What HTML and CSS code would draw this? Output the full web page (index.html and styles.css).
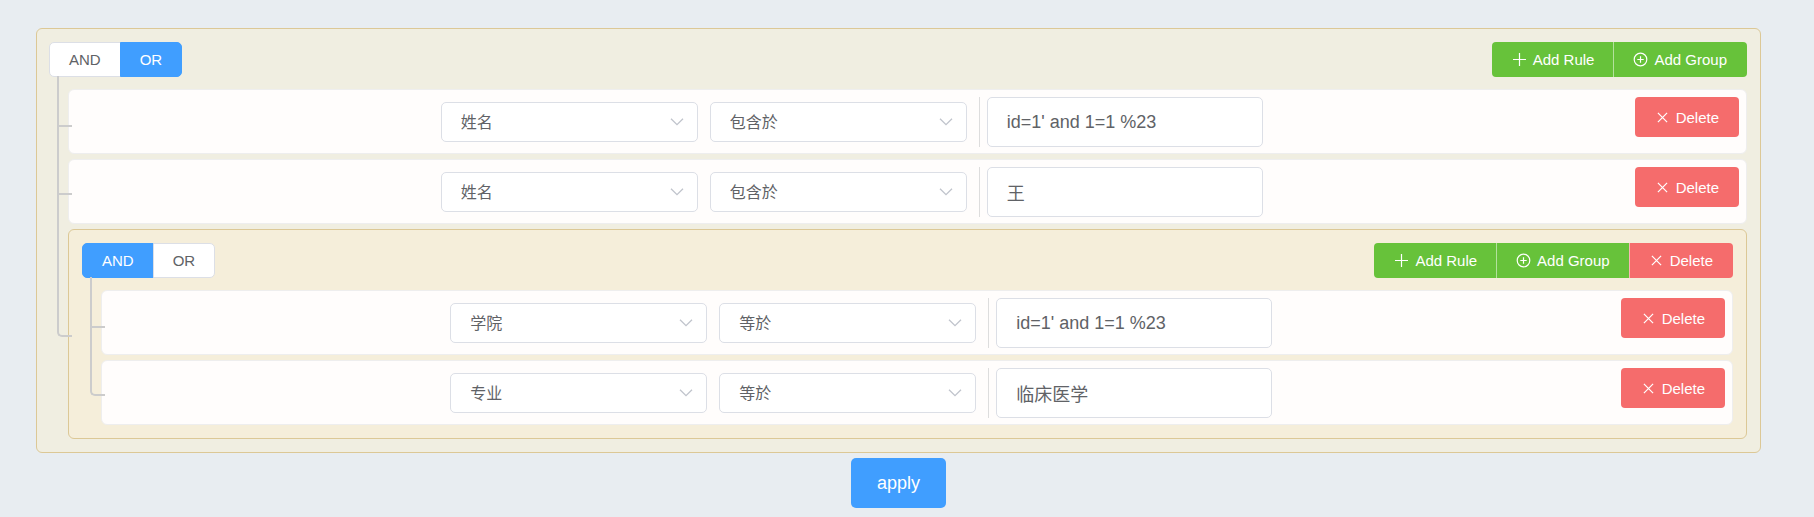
FILE: index.html
```html
<!DOCTYPE html>
<html lang="zh">
<head>
<meta charset="utf-8">
<meta name="viewport" content="width=device-width, initial-scale=1">
<title>Query Builder</title>
<link rel="stylesheet" href="styles.css">
</head>
<body>
<svg class="sprite" aria-hidden="true">
  <symbol id="plus" viewBox="0 0 15 15"><path d="M7.5 1v13M1 7.5h13"/></symbol>
  <symbol id="circle-plus" viewBox="0 0 15 15"><circle cx="7.5" cy="7.5" r="6.3"/><path d="M7.5 4.3v6.4M4.3 7.5h6.4"/></symbol>
  <symbol id="close" viewBox="0 0 15 15"><path d="M2.9 2.9l9.2 9.2M12.1 2.9l-9.2 9.2"/></symbol>
  <symbol id="chevron" viewBox="0 0 16 16"><path d="M2 4.7l6 6 6-6"/></symbol>
</svg>
<main class="page">
  <section class="group">
    <header class="group-header">
      <div class="toggle">
        <input type="radio" id="outer-and" name="outer"><label for="outer-and">AND</label>
        <input type="radio" id="outer-or" name="outer" checked><label for="outer-or">OR</label>
      </div>
      <div class="actions">
        <button class="button success" type="button"><svg class="icon"><use href="#plus"/></svg>Add Rule</button>
        <button class="button success" type="button"><svg class="icon"><use href="#circle-plus"/></svg>Add Group</button>
      </div>
    </header>
    <ul class="rules">
      <li class="node rule">
        <div class="fields">
          <div class="select"><select aria-label="Field"><option>姓名</option></select><svg class="chevron"><use href="#chevron"/></svg></div>
          <div class="select"><select aria-label="Operator"><option>包含於</option></select><svg class="chevron"><use href="#chevron"/></svg></div>
          <div class="value"><input type="text" aria-label="Value" value="id=1' and 1=1 %23"></div>
        </div>
        <button class="button danger" type="button"><svg class="icon"><use href="#close"/></svg>Delete</button>
      </li>
      <li class="node rule">
        <div class="fields">
          <div class="select"><select aria-label="Field"><option>姓名</option></select><svg class="chevron"><use href="#chevron"/></svg></div>
          <div class="select"><select aria-label="Operator"><option>包含於</option></select><svg class="chevron"><use href="#chevron"/></svg></div>
          <div class="value"><input type="text" aria-label="Value" value="王"></div>
        </div>
        <button class="button danger" type="button"><svg class="icon"><use href="#close"/></svg>Delete</button>
      </li>
      <li class="node group nested">
        <header class="group-header">
          <div class="toggle">
            <input type="radio" id="inner-and" name="inner" checked><label for="inner-and">AND</label>
            <input type="radio" id="inner-or" name="inner"><label for="inner-or">OR</label>
          </div>
          <div class="actions">
            <button class="button success" type="button"><svg class="icon"><use href="#plus"/></svg>Add Rule</button>
            <button class="button success" type="button"><svg class="icon"><use href="#circle-plus"/></svg>Add Group</button>
            <button class="button danger" type="button"><svg class="icon"><use href="#close"/></svg>Delete</button>
          </div>
        </header>
        <ul class="rules">
          <li class="node rule">
            <div class="fields">
              <div class="select"><select aria-label="Field"><option>学院</option></select><svg class="chevron"><use href="#chevron"/></svg></div>
              <div class="select"><select aria-label="Operator"><option>等於</option></select><svg class="chevron"><use href="#chevron"/></svg></div>
              <div class="value"><input type="text" aria-label="Value" value="id=1' and 1=1 %23"></div>
            </div>
            <button class="button danger" type="button"><svg class="icon"><use href="#close"/></svg>Delete</button>
          </li>
          <li class="node rule">
            <div class="fields">
              <div class="select"><select aria-label="Field"><option>专业</option></select><svg class="chevron"><use href="#chevron"/></svg></div>
              <div class="select"><select aria-label="Operator"><option>等於</option></select><svg class="chevron"><use href="#chevron"/></svg></div>
              <div class="value"><input type="text" aria-label="Value" value="临床医学"></div>
            </div>
            <button class="button danger" type="button"><svg class="icon"><use href="#close"/></svg>Delete</button>
          </li>
        </ul>
      </li>
    </ul>
  </section>
  <button class="apply" type="button">apply</button>
</main>
</body>
</html>
```
FILE: styles.css
```css
*,
*::before,
*::after {
  box-sizing: border-box;
}

body {
  margin: 0;
  background: #e8edf1;
  color: #606266;
}

body,
button,
input,
select {
  font-family: "Liberation Sans", Arial, "Noto Sans CJK SC", sans-serif;
  font-size: 15px;
}

.sprite {
  position: absolute;
  width: 0;
  height: 0;
}

.page {
  display: flex;
  flex-direction: column;
  align-items: center;
  gap: 5px;
  padding: 28px 53px 9px 36px;
}

.group {
  align-self: stretch;
  padding: 13px 13px 13px 12px;
  border: 1px solid #dcc896;
  border-radius: 6px;
  background: #f0eee1;
}

.group-header {
  display: flex;
  justify-content: space-between;
  margin-bottom: 12px;
}

.nested {
  padding: 13px;
  background: #f5eeda;
}

.toggle,
.actions {
  display: flex;
}

.toggle input {
  position: absolute;
  opacity: 0;
  pointer-events: none;
}

.toggle label {
  height: 35px;
  padding: 0 19px;
  border: 1px solid #dcdfe6;
  background: #fff;
  line-height: 33px;
  cursor: pointer;
}

.toggle label:first-of-type {
  border-radius: 5px 0 0 5px;
}

.toggle label:last-of-type {
  margin-left: -1px;
  border-radius: 0 5px 5px 0;
}

.toggle input:checked + label {
  border-color: #409eff;
  background: #409eff;
  color: #fff;
}

.button {
  display: flex;
  align-items: center;
  gap: 6px;
  height: 40px;
  padding: 0 20px;
  border: 0;
  border-radius: 4px;
  color: #fff;
  cursor: pointer;
}

.success {
  background: #67c23a;
}

.danger {
  background: #f56c6c;
}

.actions .button {
  height: 35px;
  border-radius: 0;
}

.actions .button + .button {
  padding-left: 19px;
  border-left: 1px solid rgba(255, 255, 255, 0.5);
}

.actions .button:not(:last-child) {
  padding-right: 19px;
}

.actions .button:first-child {
  border-radius: 4px 0 0 4px;
}

.actions .button:last-child {
  border-radius: 0 4px 4px 0;
}

.icon {
  width: 15px;
  height: 15px;
  fill: none;
  stroke: currentColor;
  stroke-width: 1.2;
}

.rules {
  display: flex;
  flex-direction: column;
  gap: 5px;
  margin: 0;
  padding: 0 0 0 19px;
  list-style: none;
}

.node {
  position: relative;
}

.rule {
  display: flex;
  align-items: flex-start;
  gap: 7px;
  padding: 7px 7px 6px;
  border: 1px solid #eee;
  border-radius: 6px;
  background: #fffdfc;
}

/* Tree connectors between a group and its children */
.node::before,
.node::after {
  content: "";
  position: absolute;
  left: -12px;
  width: 15px;
  border: 0 solid #ccc;
  border-left-width: 2px;
  pointer-events: none;
}

.node::before {
  top: -7px;
  height: calc(50% + 10px);
  border-bottom-width: 2px;
}

.node:first-child::before {
  top: -14px;
  height: calc(50% + 19px);
}

.node::after {
  top: 50%;
  bottom: -1px;
}

.node:last-child::before {
  border-bottom-left-radius: 5px;
}

.node:last-child::after {
  display: none;
}

.fields {
  display: flex;
  flex: 1;
  align-items: center;
  justify-content: center;
  gap: 12px;
  min-width: 0;
}

.select {
  position: relative;
  flex: 0 1 257px;
}

.select select {
  display: block;
  width: 100%;
  height: 40px;
  padding: 0 38px 0 19px;
  border: 1px solid #dcdfe6;
  border-radius: 5px;
  appearance: none;
  background: #fff;
  color: #606266;
  font-size: 16px;
}

.chevron {
  position: absolute;
  top: 12px;
  right: 13px;
  width: 16px;
  height: 16px;
  fill: none;
  stroke: #c0c4cc;
  stroke-width: 1.3;
  pointer-events: none;
}

.value {
  flex: 0 1 284px;
  min-width: 0;
  padding-left: 7px;
  border-left: 1px solid #ddd;
}

.value input {
  display: block;
  width: 100%;
  height: 50px;
  padding: 0 19px;
  border: 1px solid #dcdfe6;
  border-radius: 5px;
  background: #fff;
  color: #606266;
  font-size: 18px;
}

.apply {
  height: 50px;
  padding: 0 26px;
  border: 0;
  border-radius: 5px;
  background: #409eff;
  color: #fff;
  font-size: 18px;
  cursor: pointer;
}
```
